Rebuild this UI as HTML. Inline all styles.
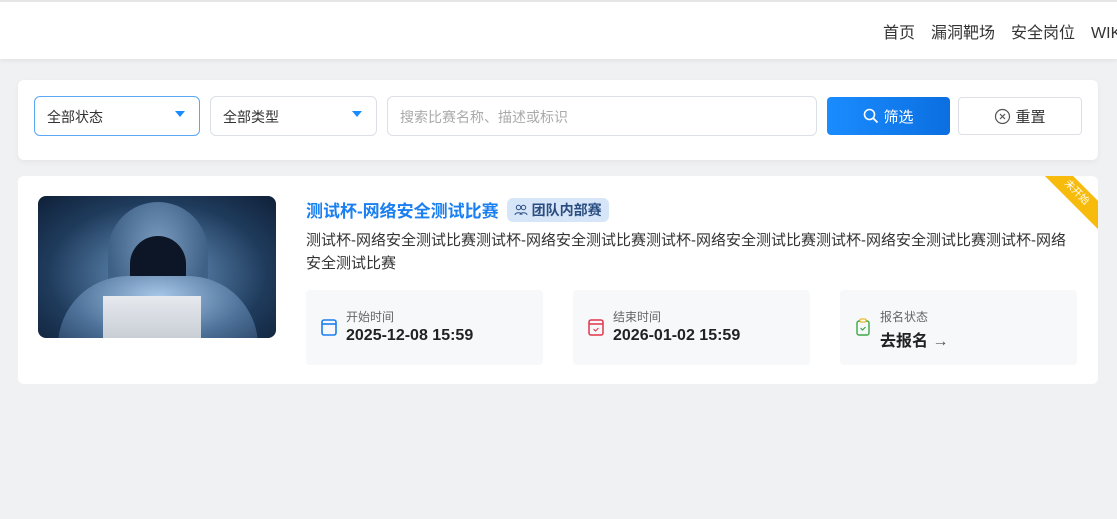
<!DOCTYPE html>
<html><head><meta charset="utf-8"><style>
*{box-sizing:border-box;margin:0;padding:0}
body{width:1117px;height:519px;overflow:hidden;background:#f0f1f3;font-family:"Liberation Sans","Noto Sans CJK SC",sans-serif;position:relative;color:#333}
.top{position:absolute;left:0;top:0;width:1117px;height:59px;background:#fff;border-top:2px solid #e6e6e6;box-shadow:0 2px 4px rgba(0,0,0,.06)}
.nav{position:absolute;top:17px;left:883px;font-size:16px;color:#333;white-space:nowrap}
.nav span{margin-right:16px}
.filter{position:absolute;left:18px;top:80px;width:1080px;height:80px;background:#fff;border-radius:6px;box-shadow:0 2px 6px rgba(0,0,0,.05)}
.sel{position:absolute;top:16px;height:40px;border:1px solid #dcdfe6;border-radius:6px;font-size:14px;padding:10px 12px;color:#333}
.sel i{position:absolute;right:14px;top:14px;width:0;height:0;border-left:5px solid transparent;border-right:5px solid transparent;border-top:6px solid #1a8cff}
.btn{position:absolute;top:17px;height:38px;border-radius:4px;font-size:15px;display:flex;align-items:center;justify-content:center;gap:4px}
.card{position:absolute;left:18px;top:176px;width:1080px;height:208px;background:#fff;border-radius:6px;overflow:hidden}
.img{position:absolute;left:20px;top:20px;width:238px;height:142px;border-radius:8px;overflow:hidden;background:radial-gradient(ellipse at 50% 55%,#8fb4d6 0%,#4a6f96 30%,#1f3b5c 65%,#0f2038 100%)}
.title{position:absolute;left:288px;top:21px;font-size:17px;font-weight:bold;color:#1a7ff0;display:flex;align-items:center}
.tag{margin-left:8px;background:#d7e5f8;color:#2a4d80;font-size:14px;border-radius:6px;padding:2px 7px;display:flex;align-items:center;gap:4px}
.desc{position:absolute;left:288px;top:53px;width:772px;font-size:15px;line-height:23px;color:#333}
.box{position:absolute;top:114px;width:237px;height:75px;background:#f7f8fa;border-radius:4px}
.box .l{position:absolute;left:40px;top:18px;font-size:12px;color:#666}
.box .v{position:absolute;left:40px;top:37px;font-size:16px;font-weight:bold;color:#222}
.box svg{position:absolute;left:15px;top:28px}
.rib{position:absolute;right:-28px;top:7px;width:100px;height:20px;background:#f7bb0c;transform:rotate(45deg);color:#fff;font-size:10px;text-align:center;line-height:20px}
</style></head><body>
<div class="top"><div class="nav"><span>首页</span><span>漏洞靶场</span><span>安全岗位</span><span>WIKI</span></div></div>
<div class="filter">
 <div class="sel" style="left:16px;width:166px;border-color:#5aa7f5">全部状态<i></i></div>
 <div class="sel" style="left:192px;width:167px">全部类型<i></i></div>
 <div class="sel" style="left:369px;width:430px;color:#aaa">搜索比赛名称、描述或标识</div>
 <div class="btn" style="left:809px;width:123px;background:linear-gradient(90deg,#1a8cff,#0b6fe0);color:#fff"><svg width="16" height="16" viewBox="0 0 16 16"><circle cx="6.5" cy="6.5" r="5" fill="none" stroke="#fff" stroke-width="1.6"/><path d="M10 10l4.5 4.5" stroke="#fff" stroke-width="1.8"/></svg>筛选</div>
 <div class="btn" style="left:940px;width:124px;border:1px solid #dcdfe6;color:#333"><svg width="17" height="17" viewBox="0 0 17 17"><circle cx="8.5" cy="8.5" r="7" fill="none" stroke="#555" stroke-width="1.2"/><path d="M6 6l5 5M11 6l-5 5" stroke="#555" stroke-width="1.2"/></svg>重置</div>
</div>
<div class="card">
 <div class="img">
  <div style="position:absolute;left:70px;top:6px;width:100px;height:110px;border-radius:50px 50px 20px 20px;background:radial-gradient(ellipse at 50% 40%,#7b9cc0,#3f6186 70%)"></div>
  <div style="position:absolute;left:92px;top:40px;width:56px;height:60px;border-radius:28px 28px 10px 10px;background:#0c1626"></div>
  <div style="position:absolute;left:20px;top:80px;width:200px;height:70px;border-radius:80px 80px 0 0;background:radial-gradient(ellipse at 50% 30%,#a8c8e8,#4e729a 60%,#2b4566)"></div>
  <div style="position:absolute;left:65px;top:100px;width:98px;height:42px;background:linear-gradient(#e6e9ee,#c9ced6)"></div>
 </div>
 <div class="title">测试杯-网络安全测试比赛<span class="tag"><svg width="14" height="12" viewBox="0 0 14 12"><circle cx="4.5" cy="3.5" r="2.2" fill="none" stroke="#2a4d80" stroke-width="1"/><circle cx="9.5" cy="3.5" r="2.2" fill="none" stroke="#2a4d80" stroke-width="1"/><path d="M1 11c0-3 7-3 7 0M6 11c0-3 7-3 7 0" fill="none" stroke="#2a4d80" stroke-width="1"/></svg>团队内部赛</span></div>
 <div class="desc">测试杯-网络安全测试比赛测试杯-网络安全测试比赛测试杯-网络安全测试比赛测试杯-网络安全测试比赛测试杯-网络安全测试比赛</div>
 <div class="box" style="left:288px"><svg width="16" height="18" viewBox="0 0 16 18"><rect x="1" y="2" width="14" height="15" rx="2" fill="none" stroke="#1a7ff0" stroke-width="1.6"/><path d="M1 6h14" stroke="#1a7ff0" stroke-width="1.6"/></svg><div class="l">开始时间</div><div class="v">2025-12-08 15:59</div></div>
 <div class="box" style="left:555px"><svg width="16" height="18" viewBox="0 0 16 18"><rect x="1" y="2" width="14" height="15" rx="2" fill="none" stroke="#e0354a" stroke-width="1.5"/><path d="M1 6h14" stroke="#e0354a" stroke-width="1.5"/><path d="M5.5 11l2 2 3-3" fill="none" stroke="#e0354a" stroke-width="1"/></svg><div class="l">结束时间</div><div class="v">2026-01-02 15:59</div></div>
 <div class="box" style="left:822px"><svg width="16" height="18" viewBox="0 0 16 18"><rect x="2" y="3" width="12" height="14" rx="2" fill="none" stroke="#3aa845" stroke-width="1.4"/><rect x="5" y="1" width="6" height="3" rx="1" fill="#fff" stroke="#e6a800" stroke-width="1"/><path d="M5.5 10l2 2 3-3" fill="none" stroke="#3aa845" stroke-width="1.2"/></svg><div class="l">报名状态</div><div class="v">去报名 <span style="font-weight:normal;color:#555">→</span></div></div>
 <div class="rib">未开始</div>
</div>
</body></html>
